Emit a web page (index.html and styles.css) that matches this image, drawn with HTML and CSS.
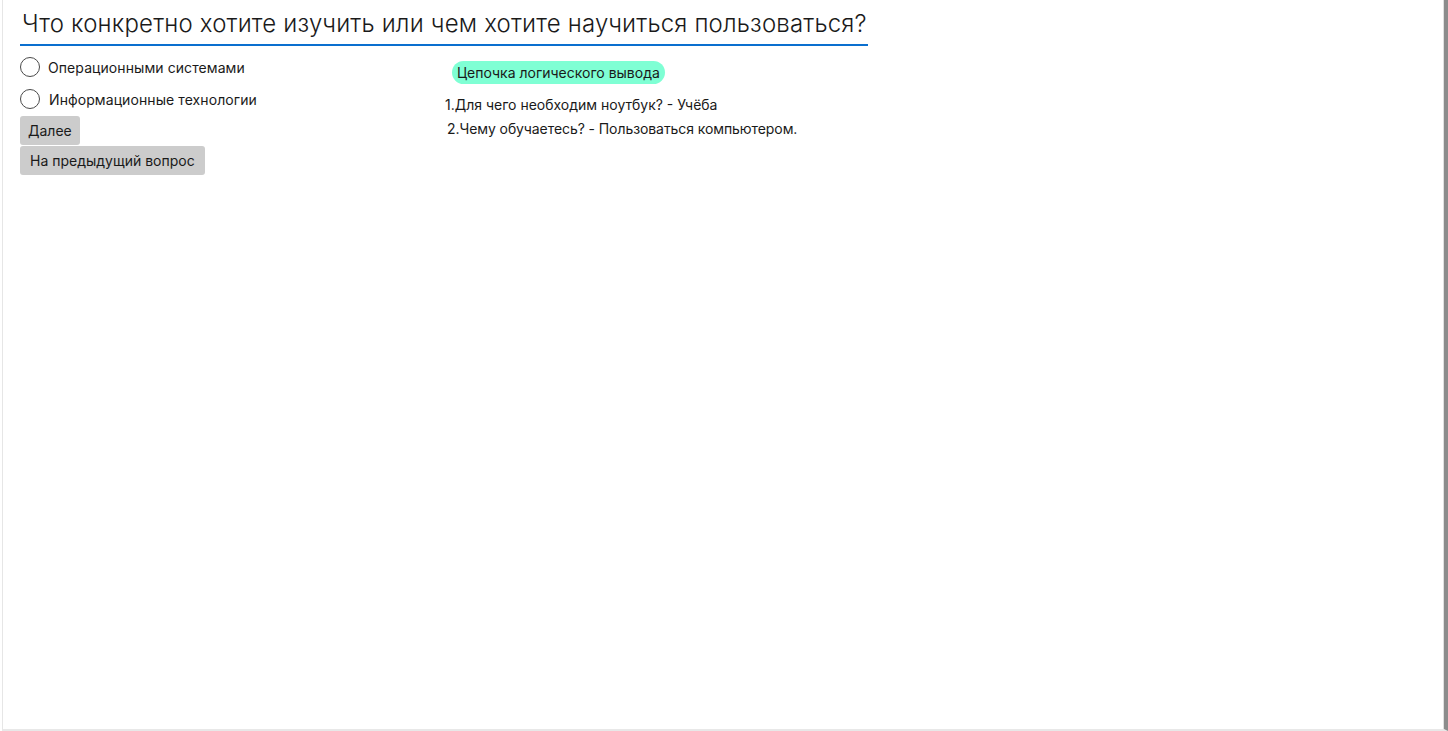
FILE: index.html
```html
<!DOCTYPE html>
<html lang="ru">
<head>
<meta charset="utf-8">
<title>Опрос</title>
<link rel="stylesheet" href="styles.css">
</head>
<body>
<div class="frame">
  <div class="page">
    <h1 class="question">Что конкретно хотите изучить или чем хотите научиться пользоваться?</h1>
    <div class="columns">
      <div class="left">
        <label class="option"><span class="radio"></span><span>Операционными системами</span></label>
        <label class="option second"><span class="radio"></span><span>Информационные технологии</span></label>
        <button class="btn">Далее</button>
        <button class="btn">На предыдущий вопрос</button>
      </div>
      <div class="right">
        <span class="badge">Цепочка логического вывода</span>
        <div class="chain">
          <div class="step">1.Для чего необходим ноутбук? - Учёба</div>
          <div class="step step2">2.Чему обучаетесь? - Пользоваться компьютером.</div>
        </div>
      </div>
    </div>
  </div>
</div>
</body>
</html>
```
FILE: styles.css
```css
* { box-sizing: border-box; }
html, body { margin: 0; padding: 0; height: 100%; background: #fff; }
body { font-family: Inter, "Noto Sans", sans-serif; color: #1a1a1a; overflow: hidden; }
.frame {
  height: 731px;
  margin-left: 2px;
  width: 1446px;
  border-left: 1px solid #e6e6e6;
  border-bottom: 2px solid #e8e8e8;
  border-right: 4px solid #8c8c8c;
  box-shadow: inset -1px 0 0 #e0e0e0;
}
.page { padding: 9px 0 0 17px; }
.question {
  margin: 0;
  width: 848px;
  font-size: 24px;
  font-weight: 300;
  line-height: 30px;
  padding: 0 0 5px 2px;
  border-bottom: 2px solid #0a6fcf;
  color: #1a1a1a;
  letter-spacing: 0.18px;
}
.columns { display: flex; }
.left { width: 425px; display: flex; flex-direction: column; align-items: flex-start; padding-top: 10px; }
.option { display: flex; align-items: center; font-size: 14px; height: 22px; letter-spacing: 0.08px; }
.option.second { margin-top: 10px; }
.radio {
  width: 20px; height: 20px; border: 1.5px solid #4a4a4a; border-radius: 50%;
  margin-right: 8px; background: #fff;
}
.option.second .radio { margin-right: 9px; }
.btn {
  font-family: inherit; font-size: 14px; color: #1a1a1a;
  background: #cccccc; border: none; border-radius: 3px;
  padding: 0 9px; height: 29px; margin-top: 1px; cursor: pointer;
}
.option.second + .btn { margin-top: 6px; padding: 0 8px; }
.btn:last-child { padding: 0 10px; }
.right { padding-top: 15px; }
.badge {
  display: inline-block; margin-left: 7px;
  background: #7fffd4; border-radius: 12px;
  font-size: 14px; line-height: 23px; padding: 0 5px;
}
.chain { margin-top: 9px; font-size: 14px; line-height: 24px; }
.step2 { padding-left: 2px; letter-spacing: -0.08px; }
```
